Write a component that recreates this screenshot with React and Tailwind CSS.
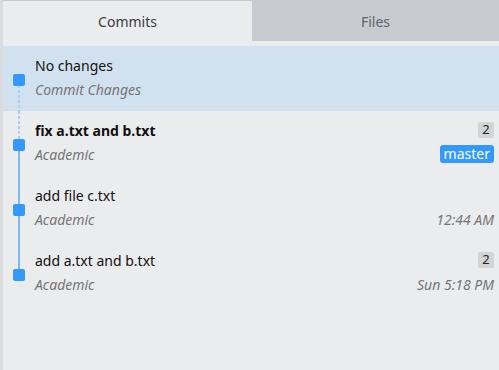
const commits = [
  { titulo: "No changes", autor: "Commit Changes", actual: true },
  { titulo: "fix a.txt and b.txt", autor: "Academic", negrita: true, cuenta: "2", rama: "master" },
  { titulo: "add file c.txt", autor: "Academic", hora: "12:44 AM" },
  { titulo: "add a.txt and b.txt", autor: "Academic", cuenta: "2", hora: "Sun 5:18 PM" },
];

const punteado = { backgroundImage: "repeating-linear-gradient(to bottom, #a9cdf3 0 3px, transparent 3px 5px)" };

// columna del grafo: nodo cuadrado + línea hacia abajo
function Grafo({ primero, ultimo, siguientePunteado }) {
  return (
    <div className="relative w-[32px] shrink-0 self-stretch">
      {!primero && (
        <div
          className={"absolute left-[15px] top-0 h-[34px] w-[2px] " + (siguientePunteado ? "" : "bg-[#7fbaf4]")}
          style={siguientePunteado ? punteado : undefined}
        />
      )}
      {!ultimo && (
        <div
          className={"absolute left-[15px] top-[34px] bottom-0 w-[2px] " + (primero ? "" : "bg-[#7fbaf4]")}
          style={primero ? punteado : undefined}
        />
      )}
      <div className="absolute left-[10px] top-[28px] h-[12px] w-[12px] rounded-[2px] bg-[#3399ff]" />
    </div>
  );
}

function Fila({ c, i, total }) {
  return (
    <div className={"flex h-[65px] " + (c.actual ? "bg-[#d2e1ef]" : "")}>
      <Grafo primero={i === 0} ultimo={i === total - 1} siguientePunteado={i === 1} />
      <div className="flex flex-1 flex-col pt-[7px] pr-[5px]">
        <div className="flex h-[24px] items-center justify-between">
          <span className={"text-[14px] text-[#111] " + (c.negrita ? "font-bold" : "")}>{c.titulo}</span>
          {c.cuenta && (
            <span className="flex h-[16px] w-[16px] items-center justify-center rounded-[2px] bg-[#d3d4d6] text-[13px] text-[#222]">
              {c.cuenta}
            </span>
          )}
        </div>
        <div className="flex h-[24px] items-center justify-between">
          <span className="text-[14px] italic text-[#767676]">{c.autor}</span>
          {c.rama && (
            <span className="rounded-[3px] bg-[#3399ff] px-[4px] text-[14px] leading-[18px] text-white">{c.rama}</span>
          )}
          {c.hora && <span className="text-[14px] italic text-[#767676]">{c.hora}</span>}
        </div>
      </div>
    </div>
  );
}

export default function App() {
  return (
    <div
      className="flex h-[370px] w-[499px] bg-[#ebecee]"
      style={{ fontFamily: '"Noto Sans", "Open Sans", sans-serif' }}
    >
      <div className="w-[3px] shrink-0 bg-[#dbdcde]" />
      <div className="flex flex-1 flex-col border-t border-[#c8cbce]">
        <div className="flex h-[40px]">
          <div className="flex w-[249px] items-center justify-center text-[14px] text-[#3c3c3c]">Commits</div>
          <div className="flex flex-1 items-center justify-center bg-[#c8cbcf] text-[14px] text-[#5b6670]">Files</div>
        </div>
        <div className="mt-[5px] flex flex-col">
          {commits.map((c, i) => (
            <Fila key={i} c={c} i={i} total={commits.length} />
          ))}
        </div>
      </div>
    </div>
  );
}
